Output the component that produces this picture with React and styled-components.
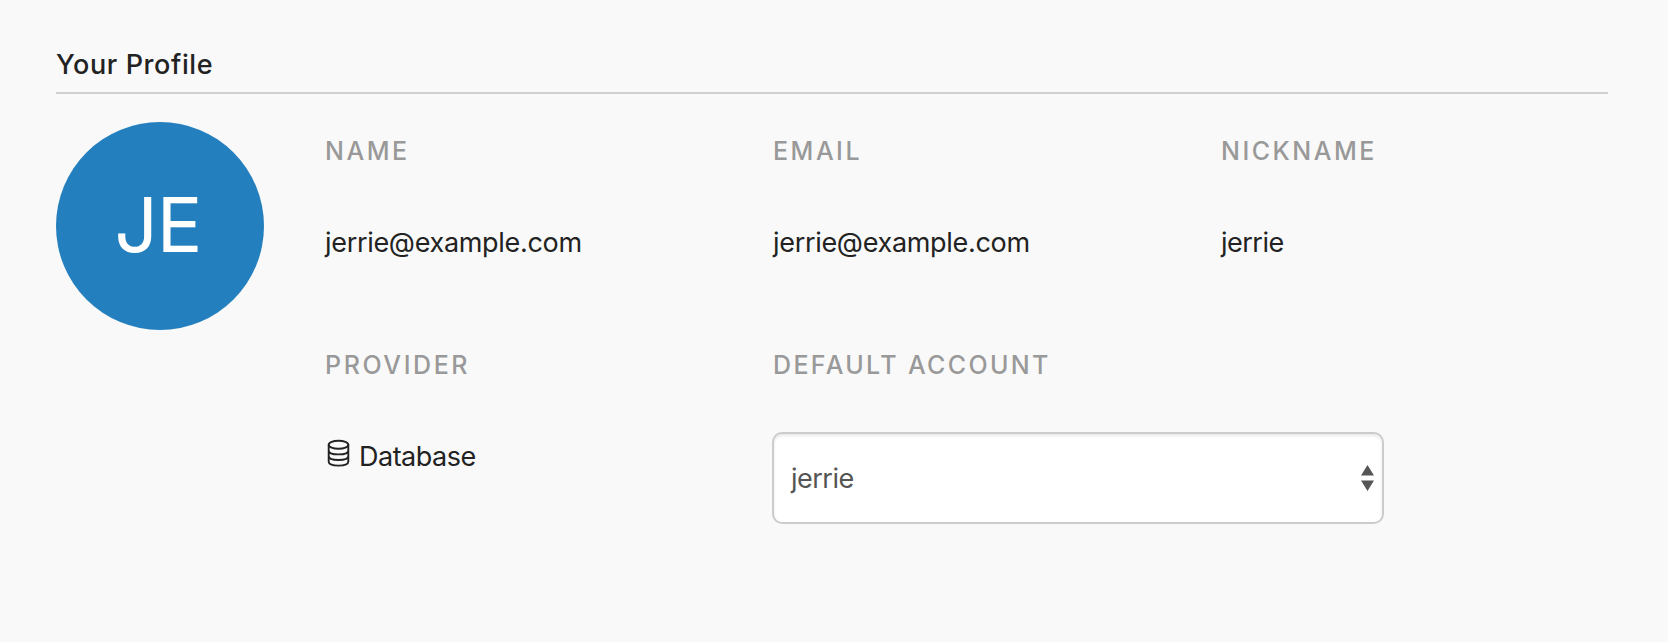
import React from "react";
import styled, { createGlobalStyle } from "styled-components";

const GlobalStyle = createGlobalStyle`
  * { box-sizing: border-box; }
  body {
    margin: 0;
    background: #f9f9f9;
    color: #222;
    font-family: Inter, "Liberation Sans", sans-serif;
    font-size: 27px;
  }
`;

const Page = styled.main`
  height: 642px;
  padding: 44px 60px 0 56px;
  overflow: hidden;
`;

const Heading = styled.h1`
  margin: 0;
  height: 50px;
  border-bottom: 2px solid #d0d0d0;
  font-size: 27px;
  line-height: 41px;
  font-weight: 500;
  letter-spacing: 0.6px;
`;

const Profile = styled.section`
  display: flex;
  gap: 61px;
  padding-top: 28px;
`;

const Avatar = styled.div`
  display: flex;
  align-items: center;
  justify-content: center;
  flex: none;
  width: 208px;
  height: 208px;
  padding: 0 4px 4px 0;
  border-radius: 50%;
  background: #237fbd;
  color: #fff;
  font-size: 76px;
  font-weight: 400;
  letter-spacing: -1px;
  line-height: 1;
`;

const Fields = styled.dl`
  display: grid;
  grid-template-columns: repeat(3, 448px);
  grid-auto-rows: 214px;
  margin: 0;
  padding-top: 14px;
`;

const Field = styled.div`
  display: flex;
  flex-direction: column;
`;

const Label = styled.dt`
  height: 75px;
  color: #999;
  font-size: 25px;
  line-height: 30px;
  font-weight: 500;
  letter-spacing: ${(p) => p.$tracking || "2.5px"};
  white-space: nowrap;
`;

const Value = styled.dd`
  display: flex;
  align-items: center;
  height: 64px;
  margin: 0;
  line-height: 40px;
  letter-spacing: ${(p) => p.$tracking || "-0.5px"};
`;

const DatabaseIcon = styled.svg`
  flex: none;
  width: 23px;
  height: 28px;
  margin: 0 9px 8px 2px;
  fill: none;
  stroke: currentColor;
  stroke-width: 1.9;
`;

const Select = styled.div`
  display: flex;
  align-items: center;
  justify-content: space-between;
  width: 612px;
  height: 92px;
  margin: 7px 0 0 -1px;
  padding: 0 8px 0 17px;
  border: 2px solid #ccc;
  border-radius: 10px;
  background: #fff;
  box-shadow: inset 0 2px 3px rgba(0, 0, 0, 0.09);
  color: #555;
  letter-spacing: -0.5px;
`;

const Arrows = styled.svg`
  width: 13px;
  height: 26px;
  fill: #555;
`;

export default function App() {
  return (
    <>
      <GlobalStyle />
      <Page>
        <Heading>Your Profile</Heading>
        <Profile>
          <Avatar>JE</Avatar>
          <Fields>
            <Field>
              <Label>NAME</Label>
              <Value $tracking="-0.31px">jerrie@example.com</Value>
            </Field>
            <Field>
              <Label>EMAIL</Label>
              <Value $tracking="-0.31px">jerrie@example.com</Value>
            </Field>
            <Field>
              <Label>NICKNAME</Label>
              <Value>jerrie</Value>
            </Field>
            <Field>
              <Label $tracking="2.6px">PROVIDER</Label>
              <Value>
                <DatabaseIcon viewBox="0 0 23 28">
                  <ellipse cx="11.5" cy="5.8" rx="9.8" ry="4" />
                  <path d="M1.7 5.8V22.5C1.7 24.9 5.5 26.6 11.5 26.6S21.3 24.9 21.3 22.5V5.8M1.7 11.4C1.7 13.8 5.5 15.4 11.5 15.4S21.3 13.8 21.3 11.4M1.7 17C1.7 19.4 5.5 21 11.5 21S21.3 19.4 21.3 17" />
                </DatabaseIcon>
                Database
              </Value>
            </Field>
            <Field>
              <Label $tracking="2.35px">DEFAULT ACCOUNT</Label>
              <Select role="combobox" aria-expanded="false">
                jerrie
                <Arrows viewBox="0 0 13 26">
                  <path d="M6.5 0L13 10.5H0ZM6.5 26L0 15.5H13Z" />
                </Arrows>
              </Select>
            </Field>
          </Fields>
        </Profile>
      </Page>
    </>
  );
}
